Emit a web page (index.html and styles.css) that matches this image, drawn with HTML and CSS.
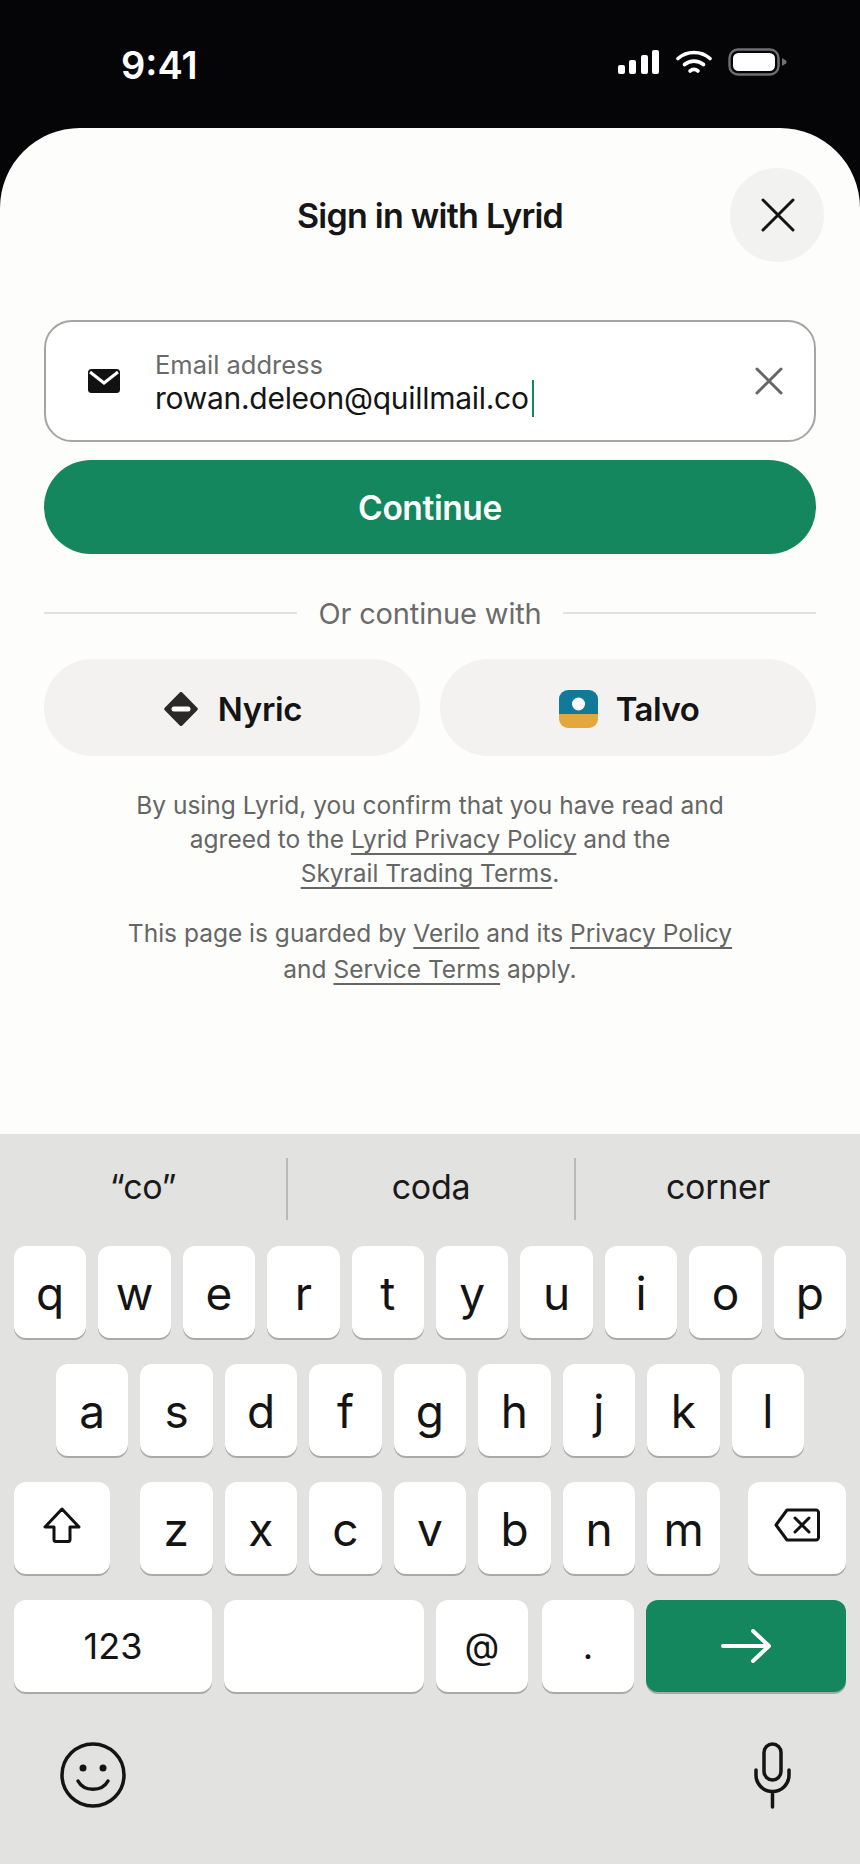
FILE: index.html
```html
<!DOCTYPE html>
<html lang="en">
<head>
<meta charset="utf-8">
<title>Sign in with Lyrid</title>
<link rel="stylesheet" href="styles.css">
</head>
<body>
<div class="phone">
  <header class="status">
    <span class="time">9:41</span>
    <div class="status-icons">
      <svg class="i-signal" width="41" height="24" viewBox="0 0 41 24"><rect x="0" y="15" width="7" height="9" rx="2"/><rect x="11" y="10" width="7" height="14" rx="2"/><rect x="23" y="5" width="7" height="19" rx="2"/><rect x="34" y="0" width="7" height="24" rx="2"/></svg>
      <svg class="i-wifi" width="36" height="24" viewBox="0 0 36 24" fill="none" stroke="#fff" stroke-width="3.6" stroke-linecap="round"><path d="M2 8.5C11 .5 25 .5 34 8.5"/><path d="M8.5 14.5C14 10 22 10 27.500 14.500"/><path d="M14 21C16.500 19 19.500 19 22 21"/></svg>
      <svg class="i-battery" width="59" height="28" viewBox="0 0 59 28"><rect x="1.500" y="1.500" width="49" height="25" rx="8.500" fill="none" stroke="#6f6f71" stroke-width="2.400"/><rect x="5" y="5" width="42" height="18" rx="5.500" fill="#fff"/><path d="M54 10l4 2.500c.8.600.8 2.400 0 3L54 18z" fill="#6f6f71"/></svg>
    </div>
  </header>

  <main class="sheet">
    <div class="sheet-head">
      <h1 class="title">Sign in with Lyrid</h1>
      <button class="close" aria-label="Close">
        <svg width="34" height="34" viewBox="0 0 34 34" fill="none" stroke="#141414" stroke-width="3" stroke-linecap="round"><path d="M2 2l30 30M32 2L2 32"/></svg>
      </button>
    </div>

    <div class="field">
      <svg class="field-mail" width="32" height="24" viewBox="0 0 32 24"><rect width="32" height="24" rx="3.500" fill="#111"/><path d="M2 3l14 11L30 3" fill="none" stroke="#fff" stroke-width="3"/></svg>
      <div class="field-body">
        <span class="field-label">Email address</span>
        <span class="field-value">rowan.deleon@quillmail.co<i class="caret"></i></span>
      </div>
      <svg class="field-clear" width="28" height="28" viewBox="0 0 28 28" fill="none" stroke="#666" stroke-width="3" stroke-linecap="round"><path d="M2 2l24 24M26 2L2 26"/></svg>
    </div>

    <button class="continue">Continue</button>

    <div class="divider"><span>Or continue with</span></div>

    <div class="providers">
      <button class="provider">
        <svg width="34" height="34" viewBox="0 0 34 34"><path d="M15.500 .8a2 2 0 0 1 3 0L33 15.500a2 2 0 0 1 0 3L18.500 33.200a2 2 0 0 1-3 0L1 18.500a2 2 0 0 1 0-3z" fill="#2b2927"/><rect x="7.500" y="14.500" width="19" height="5" rx="2.500" fill="#fff"/></svg>
        <span>Nyric</span>
      </button>
      <button class="provider provider-talvo">
        <svg width="39" height="38" viewBox="0 0 39 38"><path d="M0 24V9a9 9 0 0 1 9-9h21a9 9 0 0 1 9 9v15z" fill="#11799a"/><path d="M0 24h39v5a9 9 0 0 1-9 9H9a9 9 0 0 1-9-9z" fill="#e3a73c"/><circle cx="19.500" cy="14" r="6.500" fill="#fff"/></svg>
        <span>Talvo</span>
      </button>
    </div>

    <p class="legal legal-a">By using Lyrid, you confirm that you have read and<br>agreed to the <a>Lyrid Privacy Policy</a> and the<br><a>Skyrail Trading Terms</a>.</p>
    <p class="legal legal-b">This page is guarded by <a>Verilo</a> and its <a>Privacy Policy</a><br>and <a>Service Terms</a> apply.</p>
  </main>

  <section class="keyboard">
    <div class="suggest">
      <span>“co”</span>
      <span>coda</span>
      <span>corner</span>
    </div>
    <div class="rows">
      <div class="row">
        <b class="key">q</b><b class="key">w</b><b class="key">e</b><b class="key">r</b><b class="key">t</b><b class="key">y</b><b class="key">u</b><b class="key">i</b><b class="key">o</b><b class="key">p</b>
      </div>
      <div class="row row-mid">
        <b class="key">a</b><b class="key">s</b><b class="key">d</b><b class="key">f</b><b class="key">g</b><b class="key">h</b><b class="key">j</b><b class="key">k</b><b class="key">l</b>
      </div>
      <div class="row row-third">
        <b class="key key-shift"><svg width="38" height="36" viewBox="0 0 38 36" fill="none" stroke="#111" stroke-width="3" stroke-linejoin="round"><path d="M19 2L2 20h9v12.500a2 2 0 0 0 2 2h12a2 2 0 0 0 2-2V20h9z"/></svg></b>
        <div class="letters">
          <b class="key">z</b><b class="key">x</b><b class="key">c</b><b class="key">v</b><b class="key">b</b><b class="key">n</b><b class="key">m</b>
        </div>
        <b class="key key-del"><svg width="46" height="34" viewBox="0 0 46 34" fill="none" stroke="#111" stroke-width="3" stroke-linejoin="round" stroke-linecap="round"><path d="M13 2h29a2.500 2.500 0 0 1 2.500 2.500v25a2.500 2.500 0 0 1-2.500 2.500H13L2 17z"/><path d="M21 10l14 14M35 10L21 24"/></svg></b>
      </div>
      <div class="row row-bottom">
        <b class="key key-num">123</b>
        <b class="key key-space"></b>
        <b class="key key-sym">@</b>
        <b class="key key-sym key-dot">.</b>
        <b class="key key-go"><svg width="50" height="34" viewBox="0 0 50 34" fill="none" stroke="#fff" stroke-width="4" stroke-linecap="round" stroke-linejoin="round"><path d="M2 17h46M32 2l16 15-16 15"/></svg></b>
      </div>
    </div>
    <div class="kb-foot">
      <svg width="66" height="66" viewBox="0 0 66 66" fill="none" stroke="#141414" stroke-width="3.500" stroke-linecap="round"><circle cx="33" cy="33" r="31"/><circle cx="23" cy="26" r="3.500" fill="#141414" stroke="none"/><circle cx="43" cy="26" r="3.500" fill="#141414" stroke="none"/><path d="M18 39c6 11 24 11 30 0"/></svg>
      <svg width="37" height="67" viewBox="0 0 37 67" fill="none" stroke="#141414" stroke-width="3.500" stroke-linecap="round"><rect x="10" y="2" width="17" height="36" rx="8.500"/><path d="M2 28v5a16.500 16.500 0 0 0 33 0v-5M18.500 50v15"/></svg>
    </div>
  </section>
</div>
</body>
</html>
```
FILE: styles.css
```css
* { box-sizing: border-box; }
html, body { margin: 0; padding: 0; }
body { background: #050507; font-family: Inter, "Liberation Sans", sans-serif; }
button { font: inherit; border: 0; padding: 0; cursor: pointer; }

.phone { width: 860px; height: 1864px; display: flex; flex-direction: column; overflow: hidden; }

.status { height: 128px; flex: none; display: flex; justify-content: space-between; padding: 48px 73px 0 121px; color: #fff; }
.time { font-size: 38px; font-weight: 600; line-height: 34px; height: 34px; letter-spacing: 0; }
.status-icons { display: flex; align-items: center; height: 28px; }
.i-signal { fill: #fff; margin-right: 17px; }
.i-wifi { margin-right: 16px; }

.sheet { flex: none; height: 1006px; background: #fdfdfb; border-radius: 80px 80px 0 0; padding: 40px 44px 0; }
.sheet-head { position: relative; height: 94px; display: flex; align-items: center; justify-content: center; }
.title { margin: 0; font-size: 34px; font-weight: 600; letter-spacing: -.75px; color: #161616; }
.close { position: absolute; right: -8px; top: 0; width: 94px; height: 94px; padding-left: 2px; border-radius: 50%; background: #f2f2f1; display: flex; align-items: center; justify-content: center; }

.field { margin-top: 58px; height: 122px; border: 2px solid #a5a5a5; border-radius: 28px; background: #fff; display: flex; align-items: center; padding: 0 31px 0 42px; }
.field-mail { flex: none; }
.field-body { flex: 1; display: flex; flex-direction: column; margin: 4px 0 0 35px; }
.field-label { font-size: 25.500px; line-height: 30px; color: #6a6a6a; }
.field-value { font-size: 30px; line-height: 36px; letter-spacing: -.28px; color: #141414; display: flex; align-items: center; }
.caret { display: block; width: 2px; height: 37px; margin-left: 3px; background: #14875f; }
.field-clear { flex: none; }

.continue { display: block; width: 100%; height: 94px; margin-top: 18px; padding-top: 2px; border-radius: 47px; background: #14875f; color: #fff; font-size: 33.500px; font-weight: 600; letter-spacing: -.4px; }

.divider { margin-top: 39px; height: 40px; display: flex; align-items: center; gap: 21px; font-size: 29px; letter-spacing: -.15px; color: #6b6b6b; }
.divider::before, .divider::after { content: ""; flex: 1; height: 2px; background: #e2e2e0; }

.providers { margin-top: 26px; display: flex; gap: 20px; }
.provider { flex: 1; height: 97px; padding: 2px 0 0 2px; border-radius: 48px; background: #f3f2f1; display: flex; align-items: center; justify-content: center; gap: 20px; font-size: 33px; font-weight: 600; letter-spacing: -.3px; color: #141414; }
.provider-talvo { gap: 18px; letter-spacing: -.5px; }

.legal { margin: 0; text-align: center; color: #666; font-size: 24.500px; }
.legal a { text-decoration: underline; text-decoration-thickness: 2px; text-underline-offset: 5px; text-decoration-skip-ink: none; }
.legal-a { margin-top: 32px; line-height: 34px; }
.legal-b { margin-top: 25px; line-height: 36px; }

.keyboard { flex: 1; background: #e2e2e0; display: flex; flex-direction: column; }
.suggest { display: grid; grid-template-columns: 286px 288px 1fr; margin-top: 24px; height: 62px; align-items: center; font-size: 34px; letter-spacing: -.3px; color: #1a1a1a; text-align: center; }
.suggest span { line-height: 58px; height: 62px; }
.suggest span + span { border-left: 2px solid #b9b9b8; }
.rows { margin-top: 26px; padding: 0 14px; display: flex; flex-direction: column; gap: 26px; }
.row { display: flex; gap: 12px; }
.row-mid { padding: 0 42px; }
.row-third { gap: 0; }
.letters { width: 580px; margin: 0 auto 0 30px; display: flex; gap: 12px; }
.key { flex: 1; height: 92px; background: #fff; border-radius: 12px; box-shadow: 0 2px 0 #a9a9a8; display: flex; align-items: center; justify-content: center; font-weight: 400; font-size: 46px; color: #141414; padding-top: 1px; }
.key-shift { flex: none; width: 96px; padding: 0 0 6px; }
.key-del { flex: none; width: 98px; padding: 0 0 6px; }
.key-num { flex: none; width: 198px; font-size: 36px; padding: 0; }
.key-space { flex: none; width: 200px; padding: 0; }
.key-sym { flex: none; width: 92px; font-size: 36px; padding: 0; }
.key-dot { margin-left: 2px; }
.key-go { flex: none; width: 200px; background: #14875f; padding: 0; }
.kb-foot { margin-top: 50px; padding: 0 69px 0 60px; display: flex; justify-content: space-between; }
```
